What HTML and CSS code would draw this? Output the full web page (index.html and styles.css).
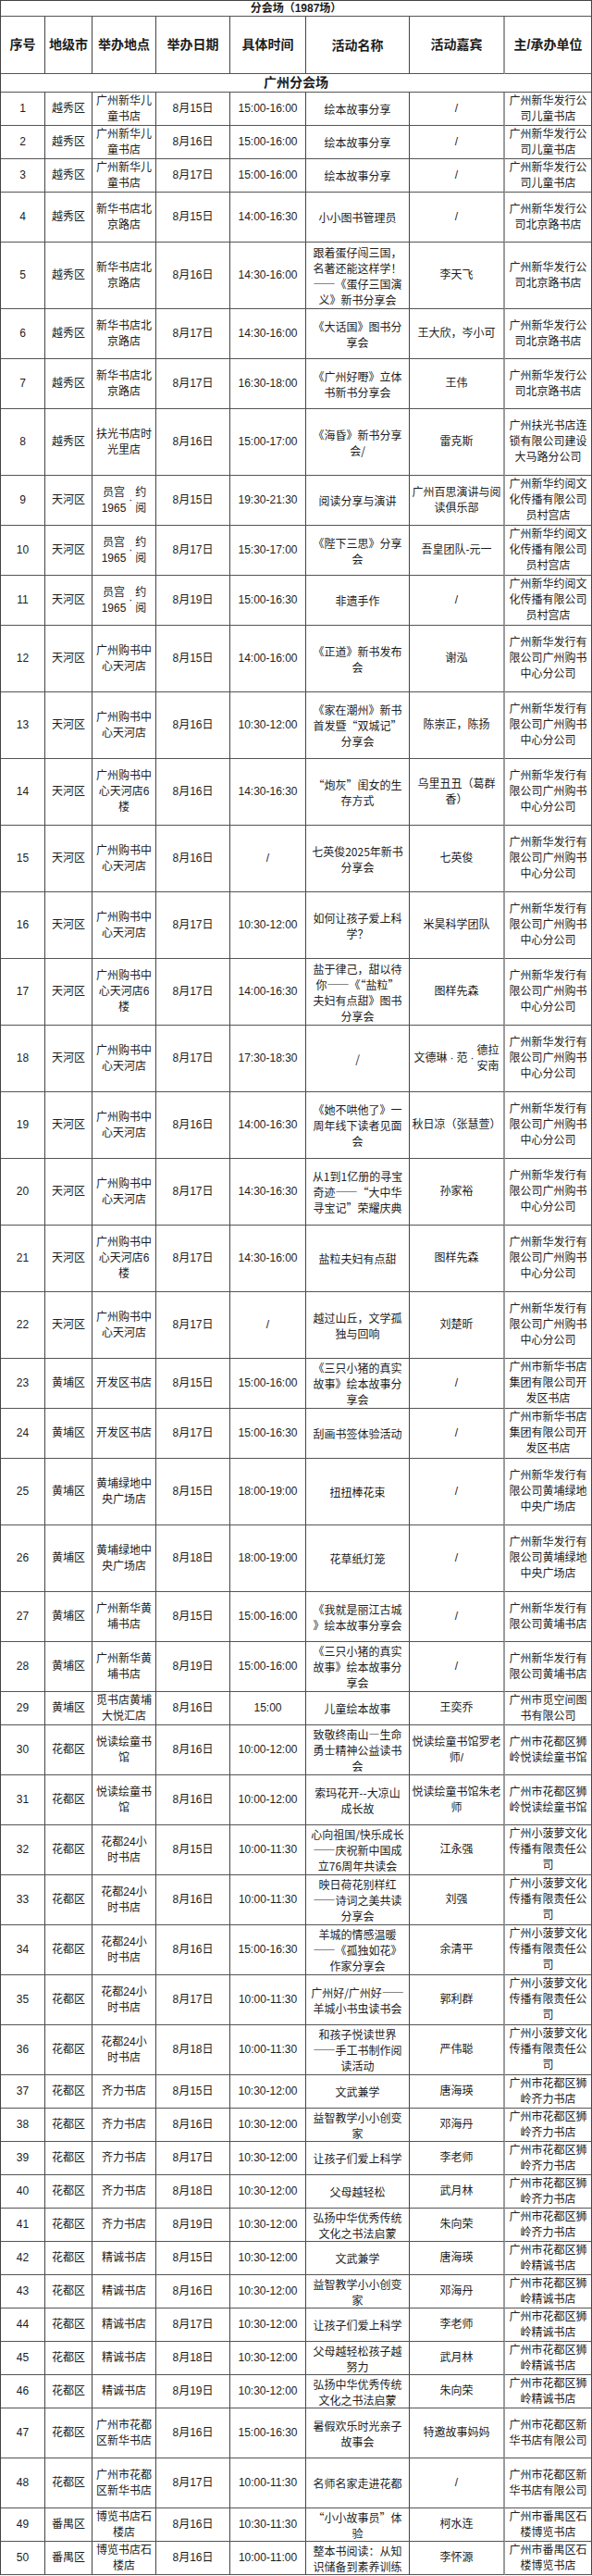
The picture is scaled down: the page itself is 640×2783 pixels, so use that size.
FILE: index.html
```html
<!DOCTYPE html>
<html lang="zh-CN">
<head>
<meta charset="utf-8">
<title>分会场（1987场）</title>
<link rel="stylesheet" href="styles.css">
</head>
<body>
<div class="sheet">
<div class="band title">分会场（1987场）</div>
<div class="row head"><div class="c">序号</div><div class="c">地级市</div><div class="c">举办地点</div><div class="c">举办日期</div><div class="c">具体时间</div><div class="c">活动名称</div><div class="c">活动嘉宾</div><div class="c">主/承办单位</div></div>
<div class="band section">广州分会场</div>

<div class="row r36"><div class="c">1</div><div class="c">越秀区</div><div class="c">广州新华儿<br>童书店</div><div class="c">8月15日</div><div class="c">15:00-16:00</div><div class="c">绘本故事分享</div><div class="c">/</div><div class="c">广州新华发行公<br>司儿童书店</div></div>
<div class="row r36"><div class="c">2</div><div class="c">越秀区</div><div class="c">广州新华儿<br>童书店</div><div class="c">8月16日</div><div class="c">15:00-16:00</div><div class="c">绘本故事分享</div><div class="c">/</div><div class="c">广州新华发行公<br>司儿童书店</div></div>
<div class="row r36"><div class="c">3</div><div class="c">越秀区</div><div class="c">广州新华儿<br>童书店</div><div class="c">8月17日</div><div class="c">15:00-16:00</div><div class="c">绘本故事分享</div><div class="c">/</div><div class="c">广州新华发行公<br>司儿童书店</div></div>
<div class="row r54"><div class="c">4</div><div class="c">越秀区</div><div class="c">新华书店北<br>京路店</div><div class="c">8月15日</div><div class="c">14:00-16:30</div><div class="c">小小图书管理员</div><div class="c">/</div><div class="c">广州新华发行公<br>司北京路书店</div></div>
<div class="row r72"><div class="c">5</div><div class="c">越秀区</div><div class="c">新华书店北<br>京路店</div><div class="c">8月16日</div><div class="c">14:30-16:00</div><div class="c">跟着蛋仔闯三国，<br>名著还能这样学！<br>——《蛋仔三国演<br>义》新书分享会</div><div class="c">李天飞</div><div class="c">广州新华发行公<br>司北京路书店</div></div>
<div class="row r54"><div class="c">6</div><div class="c">越秀区</div><div class="c">新华书店北<br>京路店</div><div class="c">8月17日</div><div class="c">14:30-16:00</div><div class="c">《大话国》图书分<br>享会</div><div class="c">王大欣，岑小可</div><div class="c">广州新华发行公<br>司北京路书店</div></div>
<div class="row r54"><div class="c">7</div><div class="c">越秀区</div><div class="c">新华书店北<br>京路店</div><div class="c">8月17日</div><div class="c">16:30-18:00</div><div class="c">《广州好嘢》立体<br>书新书分享会</div><div class="c">王伟</div><div class="c">广州新华发行公<br>司北京路书店</div></div>
<div class="row r72"><div class="c">8</div><div class="c">越秀区</div><div class="c">扶光书店时<br>光里店</div><div class="c">8月16日</div><div class="c">15:00-17:00</div><div class="c">《海昏》新书分享<br>会/</div><div class="c">雷克斯</div><div class="c">广州扶光书店连<br>锁有限公司建设<br>大马路分公司</div></div>
<div class="row r54"><div class="c">9</div><div class="c">天河区</div><div class="c">员宫<br>1965<span class="dot">·</span>约<br>阅</div><div class="c">8月15日</div><div class="c">19:30-21:30</div><div class="c">阅读分享与演讲</div><div class="c">广州百思演讲与阅<br>读俱乐部</div><div class="c">广州新华约阅文<br>化传播有限公司<br>员村宫店</div></div>
<div class="row r54"><div class="c">10</div><div class="c">天河区</div><div class="c">员宫<br>1965<span class="dot">·</span>约<br>阅</div><div class="c">8月17日</div><div class="c">15:30-17:00</div><div class="c">《陛下三思》分享<br>会</div><div class="c">吾皇团队-元一</div><div class="c">广州新华约阅文<br>化传播有限公司<br>员村宫店</div></div>
<div class="row r54"><div class="c">11</div><div class="c">天河区</div><div class="c">员宫<br>1965<span class="dot">·</span>约<br>阅</div><div class="c">8月19日</div><div class="c">15:00-16:30</div><div class="c">非遗手作</div><div class="c">/</div><div class="c">广州新华约阅文<br>化传播有限公司<br>员村宫店</div></div>
<div class="row r72"><div class="c">12</div><div class="c">天河区</div><div class="c">广州购书中<br>心天河店</div><div class="c">8月15日</div><div class="c">14:00-16:00</div><div class="c">《正道》新书发布<br>会</div><div class="c">谢泓</div><div class="c">广州新华发行有<br>限公司广州购书<br>中心分公司</div></div>
<div class="row r72"><div class="c">13</div><div class="c">天河区</div><div class="c">广州购书中<br>心天河店</div><div class="c">8月16日</div><div class="c">10:30-12:00</div><div class="c">《家在潮州》新书<br>首发暨“双城记”<br>分享会</div><div class="c">陈崇正，陈扬</div><div class="c">广州新华发行有<br>限公司广州购书<br>中心分公司</div></div>
<div class="row r72"><div class="c">14</div><div class="c">天河区</div><div class="c">广州购书中<br>心天河店6<br>楼</div><div class="c">8月16日</div><div class="c">14:30-16:30</div><div class="c">“炮灰”闺女的生<br>存方式</div><div class="c">乌里丑丑（葛群<br>香）</div><div class="c">广州新华发行有<br>限公司广州购书<br>中心分公司</div></div>
<div class="row r72"><div class="c">15</div><div class="c">天河区</div><div class="c">广州购书中<br>心天河店</div><div class="c">8月16日</div><div class="c">/</div><div class="c">七英俊2025年新书<br>分享会</div><div class="c">七英俊</div><div class="c">广州新华发行有<br>限公司广州购书<br>中心分公司</div></div>
<div class="row r72"><div class="c">16</div><div class="c">天河区</div><div class="c">广州购书中<br>心天河店</div><div class="c">8月17日</div><div class="c">10:30-12:00</div><div class="c">如何让孩子爱上科<br>学？</div><div class="c">米昊科学团队</div><div class="c">广州新华发行有<br>限公司广州购书<br>中心分公司</div></div>
<div class="row r72"><div class="c">17</div><div class="c">天河区</div><div class="c">广州购书中<br>心天河店6<br>楼</div><div class="c">8月17日</div><div class="c">14:00-16:30</div><div class="c">盐于律己，甜以待<br>你——《“盐粒”<br>夫妇有点甜》图书<br>分享会</div><div class="c">图样先森</div><div class="c">广州新华发行有<br>限公司广州购书<br>中心分公司</div></div>
<div class="row r72"><div class="c">18</div><div class="c">天河区</div><div class="c">广州购书中<br>心天河店</div><div class="c">8月17日</div><div class="c">17:30-18:30</div><div class="c">/</div><div class="c">文德琳<span class="dot">·</span>范<span class="dot">·</span>德拉<br>安南</div><div class="c">广州新华发行有<br>限公司广州购书<br>中心分公司</div></div>
<div class="row r72"><div class="c">19</div><div class="c">天河区</div><div class="c">广州购书中<br>心天河店</div><div class="c">8月16日</div><div class="c">14:00-16:30</div><div class="c">《她不哄他了》一<br>周年线下读者见面<br>会</div><div class="c">秋日凉（张慧萱）</div><div class="c">广州新华发行有<br>限公司广州购书<br>中心分公司</div></div>
<div class="row r72"><div class="c">20</div><div class="c">天河区</div><div class="c">广州购书中<br>心天河店</div><div class="c">8月17日</div><div class="c">14:30-16:30</div><div class="c">从1到1亿册的寻宝<br>奇迹——“大中华<br>寻宝记”荣耀庆典</div><div class="c">孙家裕</div><div class="c">广州新华发行有<br>限公司广州购书<br>中心分公司</div></div>
<div class="row r72"><div class="c">21</div><div class="c">天河区</div><div class="c">广州购书中<br>心天河店6<br>楼</div><div class="c">8月17日</div><div class="c">14:30-16:00</div><div class="c">盐粒夫妇有点甜</div><div class="c">图样先森</div><div class="c">广州新华发行有<br>限公司广州购书<br>中心分公司</div></div>
<div class="row r72"><div class="c">22</div><div class="c">天河区</div><div class="c">广州购书中<br>心天河店</div><div class="c">8月17日</div><div class="c">/</div><div class="c">越过山丘，文学孤<br>独与回响</div><div class="c">刘楚昕</div><div class="c">广州新华发行有<br>限公司广州购书<br>中心分公司</div></div>
<div class="row r54"><div class="c">23</div><div class="c">黄埔区</div><div class="c">开发区书店</div><div class="c">8月15日</div><div class="c">15:00-16:00</div><div class="c">《三只小猪的真实<br>故事》绘本故事分<br>享会</div><div class="c">/</div><div class="c">广州市新华书店<br>集团有限公司开<br>发区书店</div></div>
<div class="row r54"><div class="c">24</div><div class="c">黄埔区</div><div class="c">开发区书店</div><div class="c">8月17日</div><div class="c">15:00-16:30</div><div class="c">刮画书签体验活动</div><div class="c">/</div><div class="c">广州市新华书店<br>集团有限公司开<br>发区书店</div></div>
<div class="row r72"><div class="c">25</div><div class="c">黄埔区</div><div class="c">黄埔绿地中<br>央广场店</div><div class="c">8月15日</div><div class="c">18:00-19:00</div><div class="c">扭扭棒花束</div><div class="c">/</div><div class="c">广州新华发行有<br>限公司黄埔绿地<br>中央广场店</div></div>
<div class="row r72"><div class="c">26</div><div class="c">黄埔区</div><div class="c">黄埔绿地中<br>央广场店</div><div class="c">8月18日</div><div class="c">18:00-19:00</div><div class="c">花草纸灯笼</div><div class="c">/</div><div class="c">广州新华发行有<br>限公司黄埔绿地<br>中央广场店</div></div>
<div class="row r54"><div class="c">27</div><div class="c">黄埔区</div><div class="c">广州新华黄<br>埔书店</div><div class="c">8月15日</div><div class="c">15:00-16:00</div><div class="c">《我就是丽江古城<br>》绘本故事分享会</div><div class="c">/</div><div class="c">广州新华发行有<br>限公司黄埔书店</div></div>
<div class="row r54"><div class="c">28</div><div class="c">黄埔区</div><div class="c">广州新华黄<br>埔书店</div><div class="c">8月19日</div><div class="c">15:00-16:00</div><div class="c">《三只小猪的真实<br>故事》绘本故事分<br>享会</div><div class="c">/</div><div class="c">广州新华发行有<br>限公司黄埔书店</div></div>
<div class="row r36"><div class="c">29</div><div class="c">黄埔区</div><div class="c">觅书店黄埔<br>大悦汇店</div><div class="c">8月16日</div><div class="c">15:00</div><div class="c">儿童绘本故事</div><div class="c">王奕乔</div><div class="c">广州市觅空间图<br>书有限公司</div></div>
<div class="row r54"><div class="c">30</div><div class="c">花都区</div><div class="c">悦读绘童书<br>馆</div><div class="c">8月16日</div><div class="c">10:00-12:00</div><div class="c">致敬终南山—生命<br>勇士精神公益读书<br>会</div><div class="c">悦读绘童书馆罗老<br>师/</div><div class="c">广州市花都区狮<br>岭悦读绘童书馆</div></div>
<div class="row r54"><div class="c">31</div><div class="c">花都区</div><div class="c">悦读绘童书<br>馆</div><div class="c">8月16日</div><div class="c">10:00-12:00</div><div class="c">索玛花开--大凉山<br>成长故</div><div class="c">悦读绘童书馆朱老<br>师</div><div class="c">广州市花都区狮<br>岭悦读绘童书馆</div></div>
<div class="row r54"><div class="c">32</div><div class="c">花都区</div><div class="c">花都24小<br>时书店</div><div class="c">8月15日</div><div class="c">10:00-11:30</div><div class="c">心向祖国/快乐成长<br>——庆祝新中国成<br>立76周年共读会</div><div class="c">江永强</div><div class="c">广州小菠萝文化<br>传播有限责任公<br>司</div></div>
<div class="row r54"><div class="c">33</div><div class="c">花都区</div><div class="c">花都24小<br>时书店</div><div class="c">8月16日</div><div class="c">10:00-11:30</div><div class="c">映日荷花别样红<br>——诗词之美共读<br>分享会</div><div class="c">刘强</div><div class="c">广州小菠萝文化<br>传播有限责任公<br>司</div></div>
<div class="row r54"><div class="c">34</div><div class="c">花都区</div><div class="c">花都24小<br>时书店</div><div class="c">8月16日</div><div class="c">15:00-16:30</div><div class="c">羊城的情感温暖<br>——《孤独如花》<br>作家分享会</div><div class="c">余清平</div><div class="c">广州小菠萝文化<br>传播有限责任公<br>司</div></div>
<div class="row r54"><div class="c">35</div><div class="c">花都区</div><div class="c">花都24小<br>时书店</div><div class="c">8月17日</div><div class="c">10:00-11:30</div><div class="c">广州好/广州好——<br>羊城小书虫读书会</div><div class="c">郭利群</div><div class="c">广州小菠萝文化<br>传播有限责任公<br>司</div></div>
<div class="row r54"><div class="c">36</div><div class="c">花都区</div><div class="c">花都24小<br>时书店</div><div class="c">8月18日</div><div class="c">10:00-11:30</div><div class="c">和孩子悦读世界<br>——手工书制作阅<br>读活动</div><div class="c">严伟聪</div><div class="c">广州小菠萝文化<br>传播有限责任公<br>司</div></div>
<div class="row r36"><div class="c">37</div><div class="c">花都区</div><div class="c">齐力书店</div><div class="c">8月15日</div><div class="c">10:30-12:00</div><div class="c">文武兼学</div><div class="c">唐海瑛</div><div class="c">广州市花都区狮<br>岭齐力书店</div></div>
<div class="row r36"><div class="c">38</div><div class="c">花都区</div><div class="c">齐力书店</div><div class="c">8月16日</div><div class="c">10:30-12:00</div><div class="c">益智教学小小创变<br>家</div><div class="c">邓海丹</div><div class="c">广州市花都区狮<br>岭齐力书店</div></div>
<div class="row r36"><div class="c">39</div><div class="c">花都区</div><div class="c">齐力书店</div><div class="c">8月17日</div><div class="c">10:30-12:00</div><div class="c">让孩子们爱上科学</div><div class="c">李老师</div><div class="c">广州市花都区狮<br>岭齐力书店</div></div>
<div class="row r36"><div class="c">40</div><div class="c">花都区</div><div class="c">齐力书店</div><div class="c">8月18日</div><div class="c">10:30-12:00</div><div class="c">父母越轻松</div><div class="c">武月林</div><div class="c">广州市花都区狮<br>岭齐力书店</div></div>
<div class="row r36"><div class="c">41</div><div class="c">花都区</div><div class="c">齐力书店</div><div class="c">8月19日</div><div class="c">10:30-12:00</div><div class="c">弘扬中华优秀传统<br>文化之书法启蒙</div><div class="c">朱向荣</div><div class="c">广州市花都区狮<br>岭齐力书店</div></div>
<div class="row r36"><div class="c">42</div><div class="c">花都区</div><div class="c">精诚书店</div><div class="c">8月15日</div><div class="c">10:30-12:00</div><div class="c">文武兼学</div><div class="c">唐海瑛</div><div class="c">广州市花都区狮<br>岭精诚书店</div></div>
<div class="row r36"><div class="c">43</div><div class="c">花都区</div><div class="c">精诚书店</div><div class="c">8月16日</div><div class="c">10:30-12:00</div><div class="c">益智教学小小创变<br>家</div><div class="c">邓海丹</div><div class="c">广州市花都区狮<br>岭精诚书店</div></div>
<div class="row r36"><div class="c">44</div><div class="c">花都区</div><div class="c">精诚书店</div><div class="c">8月17日</div><div class="c">10:30-12:00</div><div class="c">让孩子们爱上科学</div><div class="c">李老师</div><div class="c">广州市花都区狮<br>岭精诚书店</div></div>
<div class="row r36"><div class="c">45</div><div class="c">花都区</div><div class="c">精诚书店</div><div class="c">8月18日</div><div class="c">10:30-12:00</div><div class="c">父母越轻松孩子越<br>努力</div><div class="c">武月林</div><div class="c">广州市花都区狮<br>岭精诚书店</div></div>
<div class="row r36"><div class="c">46</div><div class="c">花都区</div><div class="c">精诚书店</div><div class="c">8月19日</div><div class="c">10:30-12:00</div><div class="c">弘扬中华优秀传统<br>文化之书法启蒙</div><div class="c">朱向荣</div><div class="c">广州市花都区狮<br>岭精诚书店</div></div>
<div class="row r54"><div class="c">47</div><div class="c">花都区</div><div class="c">广州市花都<br>区新华书店</div><div class="c">8月16日</div><div class="c">15:00-16:30</div><div class="c">暑假欢乐时光亲子<br>故事会</div><div class="c">特邀故事妈妈</div><div class="c">广州市花都区新<br>华书店有限公司</div></div>
<div class="row r54"><div class="c">48</div><div class="c">花都区</div><div class="c">广州市花都<br>区新华书店</div><div class="c">8月17日</div><div class="c">10:00-11:30</div><div class="c">名师名家走进花都</div><div class="c">/</div><div class="c">广州市花都区新<br>华书店有限公司</div></div>
<div class="row r36"><div class="c">49</div><div class="c">番禺区</div><div class="c">博览书店石<br>楼店</div><div class="c">8月16日</div><div class="c">10:30-11:30</div><div class="c">“小小故事员”体<br>验</div><div class="c">柯水连</div><div class="c">广州市番禺区石<br>楼博览书店</div></div>
<div class="row r36"><div class="c">50</div><div class="c">番禺区</div><div class="c">博览书店石<br>楼店</div><div class="c">8月16日</div><div class="c">10:00-11:00</div><div class="c">整本书阅读：从知<br>识储备到素养训练</div><div class="c">李怀源</div><div class="c">广州市番禺区石<br>楼博览书店</div></div>
</div>
</body>
</html>
```

FILE: styles.css
```css
html, body {
  margin: 0;
  padding: 0;
  background: #ffffff;
}

body {
  font-family: "Liberation Sans", "Noto Sans CJK SC", sans-serif;
  font-size: 12px;
  color: #1c1c1c;
}

.sheet {
  width: 640px;
  box-sizing: border-box;
  border-top: 1px solid #444;
  border-left: 1px solid #444;
}

.band {
  display: flex;
  align-items: center;
  justify-content: center;
  box-sizing: border-box;
  border-bottom: 1px solid #555;
  border-right: 1px solid #444;
  font-weight: bold;
  white-space: nowrap;
}

.title {
  height: 17px;
  font-size: 12px;
  line-height: 16px;
}

.section {
  height: 20px;
  font-size: 14px;
  line-height: 19px;
}

.row {
  display: grid;
  grid-template-columns: 48px 51px 69px 80px 82px 112px 103px 94px;
}

.c {
  display: flex;
  align-items: center;
  justify-content: center;
  box-sizing: border-box;
  border-right: 1px solid #444;
  border-bottom: 1px solid #555;
  text-align: center;
  line-height: 17px;
  white-space: nowrap;
  min-width: 0;
}

.c:nth-child(6) {
  font-family: "Noto Sans CJK SC", "Liberation Sans", sans-serif;
}

.c:nth-child(7) {
  border-right: 2px solid #9c9c9c;
}

.head {
  height: 62px;
  font-size: 14px;
  font-weight: bold;
}

.r36 { height: 36px; }
.r54 { height: 54px; }
.r72 { height: 72px; }

.dot {
  padding: 0 3px;
}
```
